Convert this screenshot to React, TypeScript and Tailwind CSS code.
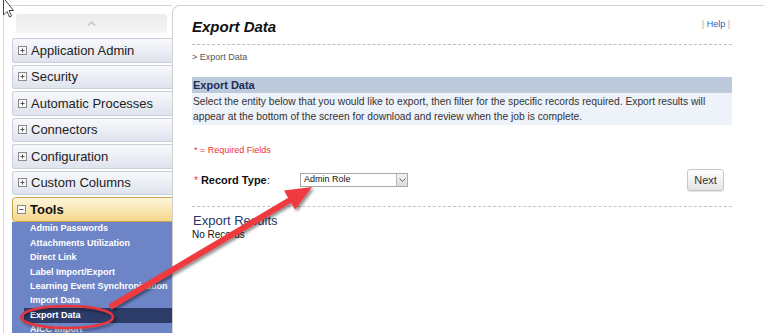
const menu = [
  "Application Admin",
  "Security",
  "Automatic Processes",
  "Connectors",
  "Configuration",
  "Custom Columns",
];

const tools = [
  "Admin Passwords",
  "Attachments Utilization",
  "Direct Link",
  "Label Import/Export",
  "Learning Event Synchronization",
  "Import Data",
  "Export Data",
  "AICC Import",
];

function BoxIcon({ open }: { open?: boolean }) {
  return (
    <svg width="9" height="9" viewBox="0 0 9 9" className="shrink-0">
      <rect x="0.5" y="0.5" width="8" height="8" fill="#fafafa" stroke="#8a8a8a" />
      <path d="M2.5 4.5h4" stroke="#555" strokeWidth="1" />
      {!open && <path d="M4.5 2.5v4" stroke="#555" strokeWidth="1" />}
    </svg>
  );
}

function Sidebar() {
  return (
    <aside className="w-[169px] shrink-0 border-l border-t border-[#d4d4d4] pl-[8px] pt-[8px] flex flex-col overflow-hidden">
      <div className="shrink-0 ml-[4px] w-[151px] h-[19px] rounded-[2px] bg-gradient-to-b from-[#ececec] to-[#f5f5f5] flex items-center justify-center">
        <svg width="9" height="5" viewBox="0 0 9 5">
          <path d="M1 4.5L4.5 1L8 4.5" fill="none" stroke="#c4c4c4" strokeWidth="1.4" />
        </svg>
      </div>
      <div className="shrink-0 mt-[5px] flex flex-col gap-[2px]">
        {menu.map((m) => (
          <div
            key={m}
            className="shrink-0 h-[24.5px] w-[160px] rounded-l-[3px] border border-r-0 border-[#c9d0dc] bg-gradient-to-b from-[#f8f9fc] to-[#dee3ed] flex items-center gap-[4px] pl-[5px] text-[13px] text-[#222]"
          >
            <BoxIcon />
            <span>{m}</span>
          </div>
        ))}
        <div className="shrink-0 relative h-[25px] w-[160px]">
          <svg width="172" height="25" viewBox="0 0 172 25" className="absolute left-0 top-0">
            <defs>
              <linearGradient id="tg" x1="0" y1="0" x2="0" y2="1">
                <stop offset="0" stopColor="#fdf7de" />
                <stop offset="1" stopColor="#f4d689" />
              </linearGradient>
            </defs>
            <path
              d="M3.5 0.5H160.5L171 12.5L160.5 24.5H3.5Q0.5 24.5 0.5 21.5V3.5Q0.5 0.5 3.5 0.5Z"
              fill="url(#tg)"
              stroke="#c9a550"
            />
          </svg>
          <div className="relative h-full flex items-center gap-[4px] pl-[5px] text-[13px] font-bold text-[#111]">
            <BoxIcon open />
            <span>Tools</span>
          </div>
        </div>
      </div>
      <div className="flex-1 shrink-0 w-[160px] bg-[#6d85c6] pl-[12px]">
        {tools.map((t) => (
          <div
            key={t}
            className={
              "h-[14.4px] flex items-center pl-[6px] text-[9px] font-bold text-white whitespace-nowrap " +
              (t === "Export Data" ? "bg-[#2c3b68]" : "")
            }
          >
            {t}
          </div>
        ))}
      </div>
    </aside>
  );
}

function Panel() {
  return (
    <main className="flex-1 border-l border-t border-[#d2d2d2] rounded-tl-[8px] bg-white pl-[19px] pr-[32px] pt-[11.5px]">
      <div className="flex items-start justify-between">
        <h1 className="text-[15px] leading-[18px] font-bold italic text-[#111]">Export Data</h1>
        <div className="mt-[1px] text-[9px] leading-[11px] text-[#aaa] pr-[2px]">
          | <span className="text-[#3a5ab0]">Help</span> |
        </div>
      </div>
      <div className="mt-[8.5px] border-t border-dashed border-[#bdbdbd]" />
      <div className="mt-[7px] text-[9px] leading-[11px] text-[#555]">&gt; Export Data</div>
      <div className="mt-[14px] h-[16px] bg-[#bccadb] pl-[1px] flex items-center text-[11px] font-bold text-[#1e2c55]">
        Export Data
      </div>
      <div className="h-[32px] bg-[#eef2f9] pl-[1px] pt-[1px] text-[10.25px] leading-[15px] text-[#333]">
        Select the entity below that you would like to export, then filter for the specific records required. Export results will
        appear at the bottom of the screen for download and review when the job is complete.
      </div>
      <div className="mt-[20px] pl-[2px] text-[9px] leading-[11px] text-[#f0303a]">* = Required Fields</div>
      <div className="mt-[13px] h-[22px] flex items-center pl-[2px] pr-[8px]">
        <div className="w-[106px] text-[11px] text-[#111]">
          <span className="text-[#f0303a] text-[10px] mr-[3px]">*</span>
          <span className="font-bold">Record Type</span>:
        </div>
        <div className="w-[108px] h-[14px] border border-[#a8a8a8] bg-white flex items-center">
          <span className="flex-1 pl-[3px] text-[9px] text-[#111]">Admin Role</span>
          <div className="w-[11px] h-full border-l border-[#b5b5b5] bg-gradient-to-b from-[#f3f3f3] to-[#dcdcdc] flex items-center justify-center">
            <svg width="7" height="4" viewBox="0 0 7 4">
              <path d="M0.5 0.5L3.5 3.5L6.5 0.5" fill="none" stroke="#666" strokeWidth="1" />
            </svg>
          </div>
        </div>
        <button className="ml-auto w-[37px] h-[22px] rounded-[3px] border border-[#c8c8c8] bg-gradient-to-b from-[#ffffff] to-[#e4e4e4] text-[11px] text-[#333] shadow-[0_1px_1px_rgba(0,0,0,0.12)]">
          Next
        </button>
      </div>
      <div className="mt-[15px] border-t border-dashed border-[#c4c4c4]" />
      <div className="mt-[5.5px] pl-[1px] text-[13px] leading-[15px] text-[#2a3766]">Export Results</div>
      <div className="mt-[1.5px] text-[10px] leading-[12px] text-[#111]">No Records</div>
    </main>
  );
}

export default function App() {
  return (
    <div className="relative w-[764px] h-[333px] overflow-hidden bg-white font-['Liberation_Sans',Arial,sans-serif]">
      <div className="flex h-full pt-[5px] pl-[3px]">
        <Sidebar />
        <Panel />
      </div>
      <svg width="764" height="333" viewBox="0 0 764 333" className="absolute left-0 top-0 pointer-events-none">
        <defs>
          <filter id="sh" x="-10%" y="-10%" width="130%" height="130%">
            <feDropShadow dx="2" dy="2" stdDeviation="1.5" floodColor="#000" floodOpacity="0.45" />
          </filter>
        </defs>
        <g filter="url(#sh)">
          <line x1="110" y1="307" x2="291" y2="199.5" stroke="#ef3a40" strokeWidth="6" />
          <polygon points="312,187 284,190.6 295.1,209.6" fill="#ef3a40" />
          <ellipse cx="67" cy="317" rx="46" ry="11" fill="none" stroke="#e8363c" strokeWidth="2.5" />
        </g>
        <path d="M3.5 -2V15L7 11.5L9.5 17L11.5 16L9 10.5H13.5Z" fill="#fff" stroke="#333" strokeWidth="0.9" />
      </svg>
    </div>
  );
}
